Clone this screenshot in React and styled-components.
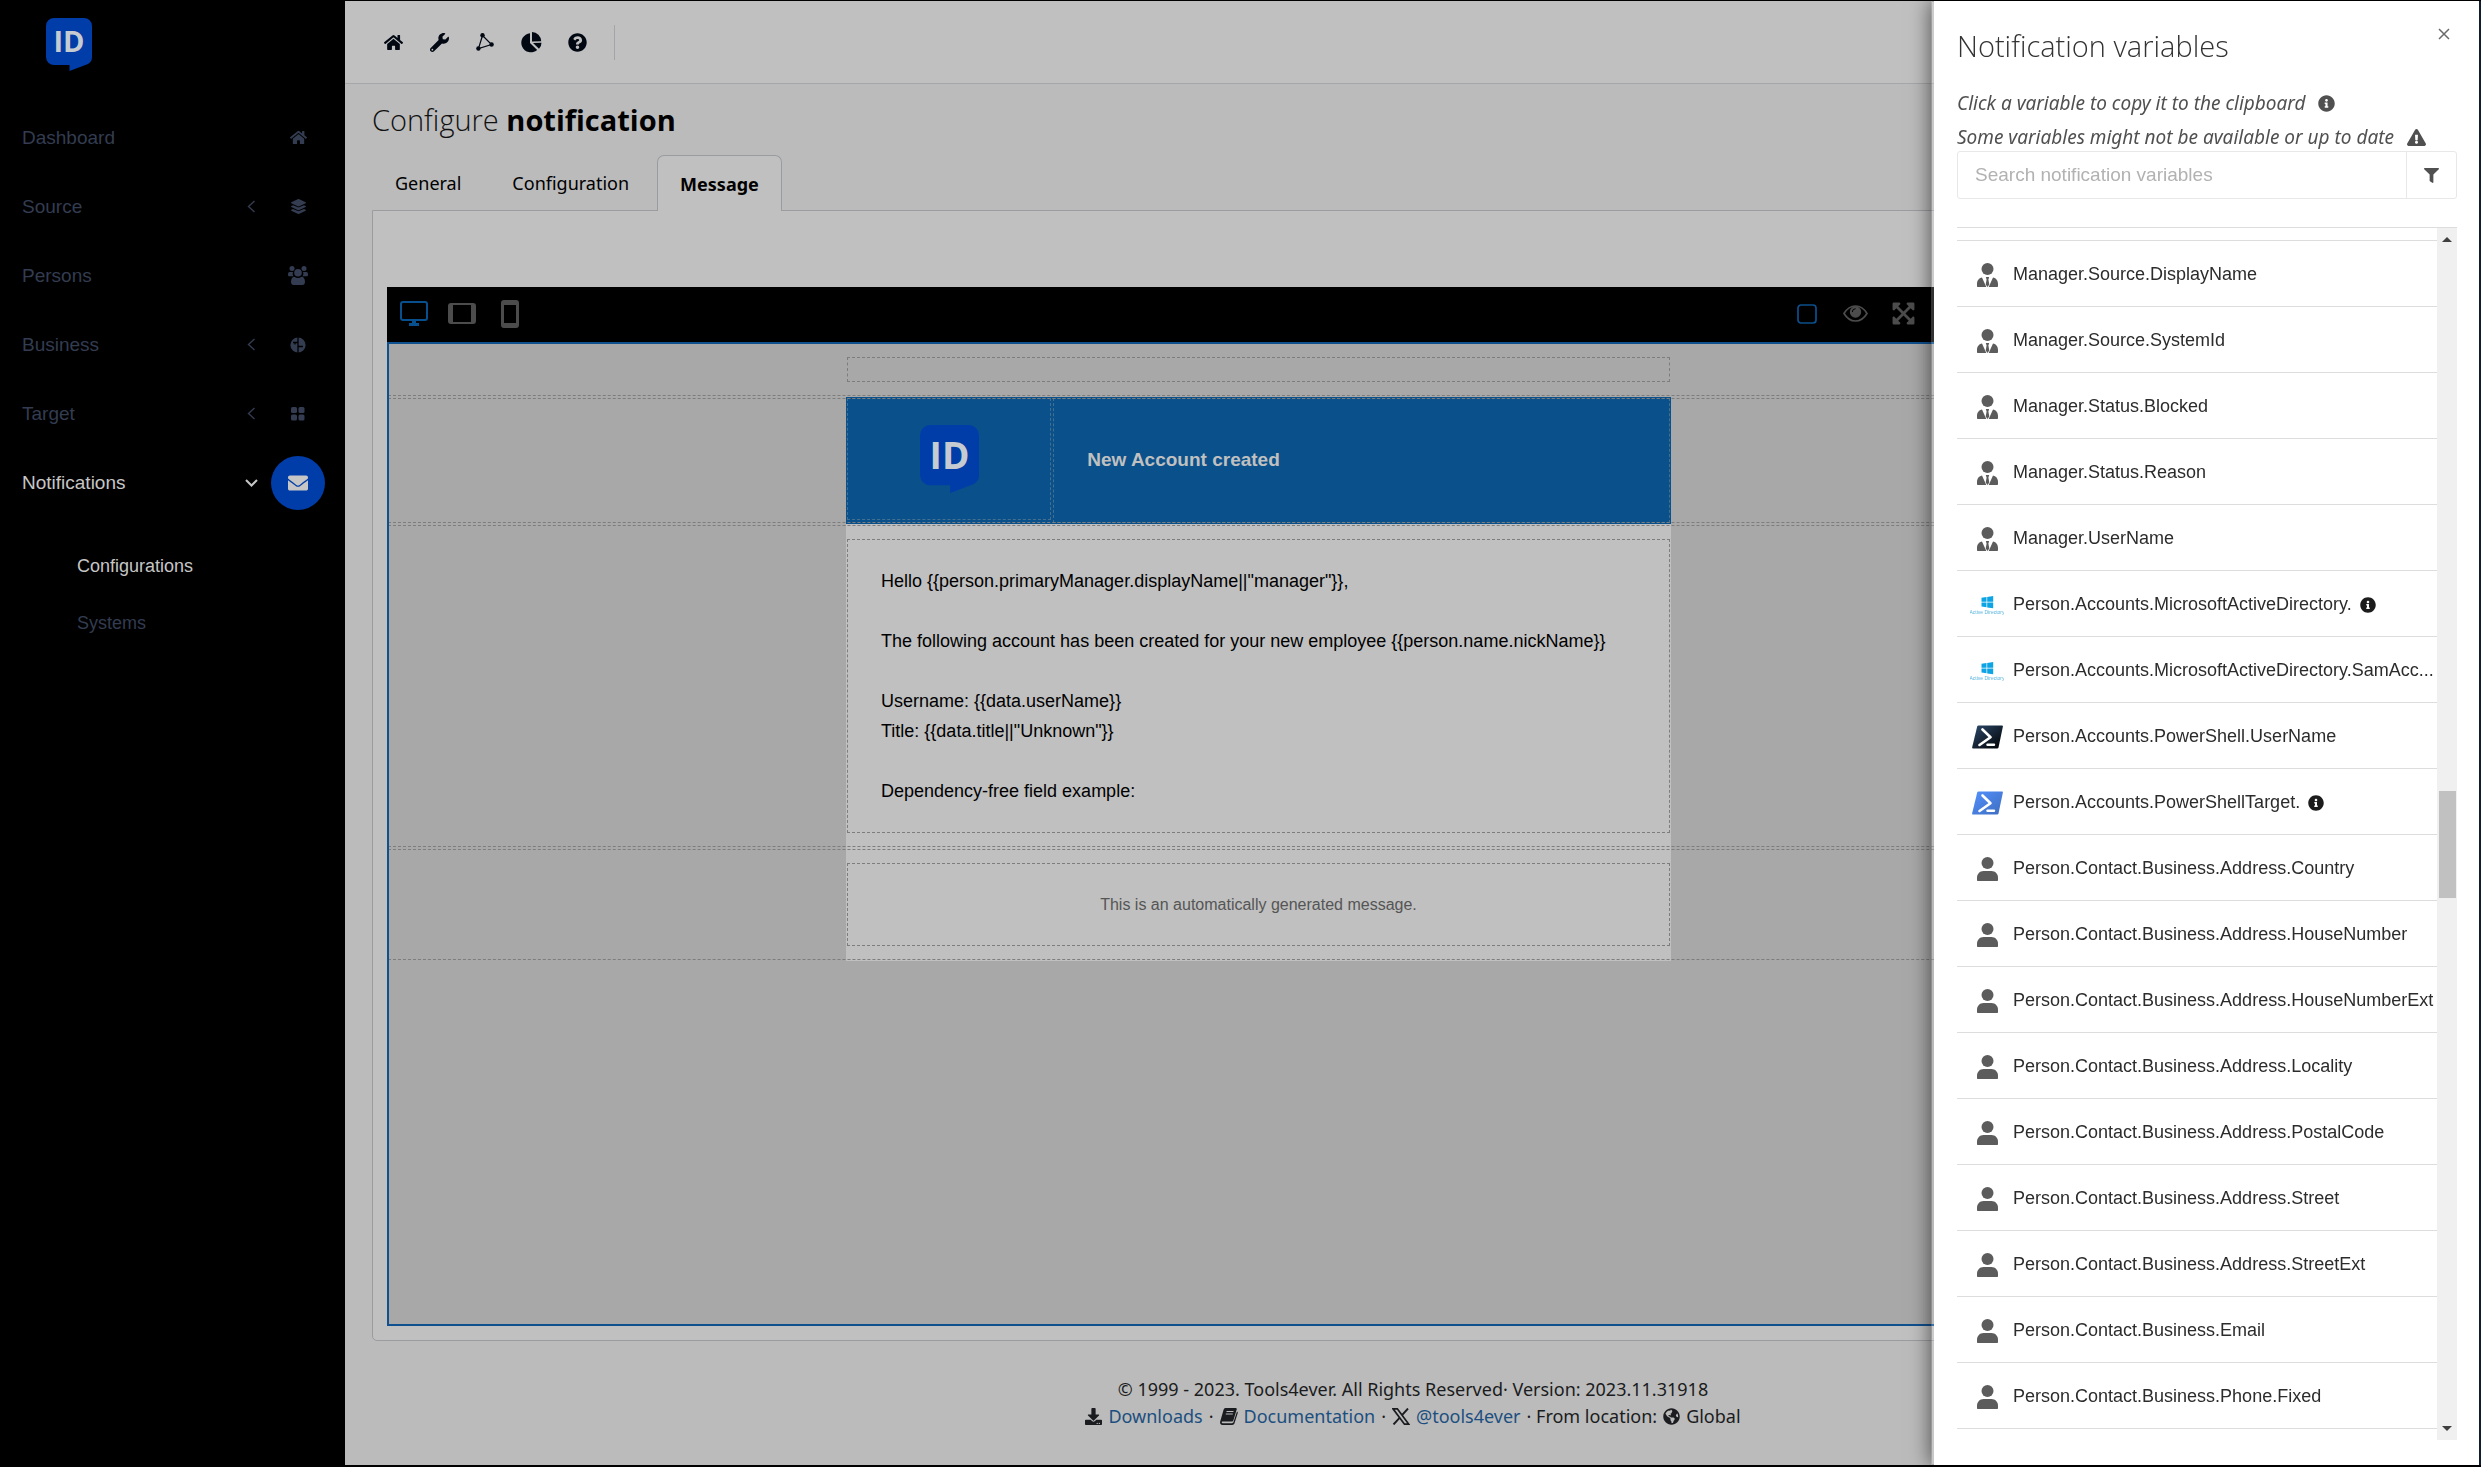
import React from "react";
import styled, { createGlobalStyle, css } from "styled-components";
import {
  FaHome,
  FaWrench,
  FaQuestionCircle,
  FaLayerGroup,
  FaEnvelope,
  FaDownload,
  FaGlobeAmericas,
  FaInfoCircle,
  FaExclamationTriangle,
  FaFilter,
  FaExpandArrowsAlt,
} from "react-icons/fa";

const variables = [
  { icon: "manager", name: "Manager.Source.DisplayName" },
  { icon: "manager", name: "Manager.Source.SystemId" },
  { icon: "manager", name: "Manager.Status.Blocked" },
  { icon: "manager", name: "Manager.Status.Reason" },
  { icon: "manager", name: "Manager.UserName" },
  { icon: "ad", name: "Person.Accounts.MicrosoftActiveDirectory.", info: true },
  { icon: "ad", name: "Person.Accounts.MicrosoftActiveDirectory.SamAcc..." },
  { icon: "psDark", name: "Person.Accounts.PowerShell.UserName" },
  { icon: "psBlue", name: "Person.Accounts.PowerShellTarget.", info: true },
  { icon: "person", name: "Person.Contact.Business.Address.Country" },
  { icon: "person", name: "Person.Contact.Business.Address.HouseNumber" },
  { icon: "person", name: "Person.Contact.Business.Address.HouseNumberExt" },
  { icon: "person", name: "Person.Contact.Business.Address.Locality" },
  { icon: "person", name: "Person.Contact.Business.Address.PostalCode" },
  { icon: "person", name: "Person.Contact.Business.Address.Street" },
  { icon: "person", name: "Person.Contact.Business.Address.StreetExt" },
  { icon: "person", name: "Person.Contact.Business.Email" },
  { icon: "person", name: "Person.Contact.Business.Phone.Fixed" },
];

const IdLogo = ({ width }) => (
  <svg width={width} viewBox="0 0 46 53" role="img" aria-label="ID">
    <path
      d="M8 0h30a8 8 0 0 1 8 8v31c0 3-1 5-4 7L23.500 53V47H8a8 8 0 0 1-8-8V8a8 8 0 0 1 8-8z"
      fill="#003da8"
    />
    <text
      x="23"
      y="34"
      textAnchor="middle"
      fontFamily="'Open Sans', sans-serif"
      fontWeight="700"
      fontSize="29"
      fill="#c6cbd2"
    >
      ID
    </text>
  </svg>
);

const PeopleIcon = () => (
  <svg width="20" height="19" viewBox="0 0 20 19" fill="currentColor">
    <circle cx="4" cy="2.600" r="2.500" />
    <circle cx="16" cy="2.600" r="2.500" />
    <path d="M1.500 6h3.500c-.7 1.800-.3 3.300.7 4.300H1.200C.3 10.300 0 9.500 0 8.500 0 7 .5 6 1.500 6zM18.500 6H15c.7 1.800.3 3.300-.7 4.300h4.500c.9 0 1.200-.8 1.200-1.800C20 7 19.500 6 18.500 6z" />
    <circle cx="10" cy="6.800" r="3.800" />
    <path d="M6.500 10.800c1 .8 2.200 1.200 3.500 1.200s2.500-.4 3.500-1.200c2.200 0 3.500 2 3.500 5 0 2-.8 3.200-2.500 3.200h-9C3.800 19 3 17.800 3 15.800c0-3 1.300-5 3.500-5z" />
  </svg>
);

const BusinessIcon = () => (
  <svg width="16" height="16" viewBox="0 0 16 16">
    <circle cx="8" cy="8" r="7.600" fill="currentColor" />
    <path
      d="M8 0v16M3 5.500h5M5 5.500v2M8 9.500h5"
      stroke="#000"
      strokeWidth="1.300"
      fill="none"
    />
  </svg>
);

const GridIcon = () => (
  <svg width="14" height="14" viewBox="0 0 14 14" fill="currentColor">
    <rect width="6" height="6" rx="1.500" />
    <rect x="7.500" width="6" height="6" rx="1.500" />
    <rect y="7.500" width="6" height="6" rx="1.500" />
    <rect x="7.500" y="7.500" width="6" height="6" rx="1.500" />
  </svg>
);

const NetworkIcon = () => (
  <svg width="18" height="18" viewBox="0 0 18 18">
    <path
      d="M6.500 2.500L15.500 11.500L2.500 15.500Z"
      fill="none"
      stroke="currentColor"
      strokeWidth="1.200"
    />
    <circle cx="6.500" cy="2.300" r="2.200" fill="currentColor" />
    <circle cx="15.600" cy="11.500" r="2.200" fill="currentColor" />
    <circle cx="2.400" cy="15.500" r="2.200" fill="currentColor" />
  </svg>
);

const PieIcon = () => (
  <svg width="22" height="21" viewBox="0 0 22 21" fill="currentColor">
    <path d="M10 1.200V11l7.200 7A9.600 9.600 0 1 1 10 1.200z" />
    <path d="M12 0a9.600 9.600 0 0 1 9.200 9.300L12 9.500z" />
    <path d="M13 11l8.500-.3a9 9 0 0 1-2.500 6.100z" />
  </svg>
);

const ChevronIcon = ({ open }) => (
  <svg
    width="13"
    height="13"
    viewBox="0 0 13 13"
    fill="none"
    stroke="currentColor"
    strokeWidth={open ? 2 : 1.4}
  >
    <path d={open ? "M1 4l5.500 5.500L12 4" : "M9.500 1L3.500 6.500L9.500 12"} />
  </svg>
);

const DesktopIcon = () => (
  <svg width="28" height="26" viewBox="0 0 28 26">
    <rect x="1" y="1" width="26" height="18" rx="2" fill="none" stroke="currentColor" strokeWidth="2" />
    <path d="M12 19h4v3h3v3H9v-3h3z" fill="currentColor" />
  </svg>
);

const TabletIcon = () => (
  <svg width="28" height="21" viewBox="0 0 28 21">
    <path
      fill="currentColor"
      fillRule="evenodd"
      d="M3 0h22a3 3 0 0 1 3 3v15a3 3 0 0 1-3 3H3a3 3 0 0 1-3-3V3a3 3 0 0 1 3-3zM5 2v17h18V2z"
    />
  </svg>
);

const MobileIcon = () => (
  <svg width="18" height="28" viewBox="0 0 18 28">
    <path
      fill="currentColor"
      fillRule="evenodd"
      d="M3 0h12a3 3 0 0 1 3 3v22a3 3 0 0 1-3 3H3a3 3 0 0 1-3-3V3a3 3 0 0 1 3-3zM3 5v18h12V5z"
    />
  </svg>
);

const SquareIcon = () => (
  <svg width="20" height="20" viewBox="0 0 20 20">
    <rect x="1" y="1" width="18" height="18" rx="3" fill="none" stroke="currentColor" strokeWidth="1.700" />
  </svg>
);

const EyeIcon = () => (
  <svg width="25" height="17" viewBox="0 0 25 17">
    <path
      d="M1 8.500C4 3.500 8 1 12.500 1S21 3.500 24 8.500C21 13.500 17 16 12.500 16S4 13.500 1 8.500z"
      fill="none"
      stroke="currentColor"
      strokeWidth="1.700"
    />
    <circle cx="12.500" cy="7" r="5.700" fill="currentColor" />
    <path d="M9.300 7a3.300 3.300 0 0 1 3.300-3.300" fill="none" stroke="#000" strokeWidth="1" />
  </svg>
);

const BookIcon = () => (
  <svg width="18" height="17" viewBox="0 0 18 17">
    <path
      d="M5.500 0h10c1 0 1.500.7 1.200 1.600L13.500 12c-.3 1-1 1.500-2 1.500H2.300c-.8 0-.8 1.700.3 1.700H12c.7 0 1.300-.4 1.500-1.100L17 3.500c.7.300 1 .9.700 1.700L14.500 15.200c-.3 1-1.200 1.700-2.300 1.700H2.500C.8 17-.4 15.200.2 13.500L3.500 2C3.800.8 4.500 0 5.500 0z"
      fill="currentColor"
    />
    <path d="M6.500 3.500h7M5.800 6h7" stroke="#bbb" strokeWidth="1" />
  </svg>
);

const XLogo = () => (
  <svg width="18" height="17" viewBox="0 0 18 17" fill="none" stroke="currentColor">
    <path d="M1 .8h4.300l11.500 15.400h-4.300z" strokeWidth="1.700" />
    <path d="M16 .5L10 7.200M7.800 9.600L1.500 16.500" strokeWidth="1.900" />
  </svg>
);

const PersonIcon = () => (
  <svg width="21" height="24" viewBox="0 0 21 24" fill="currentColor">
    <circle cx="10.500" cy="6" r="6" />
    <path d="M6.500 14h8c3.700 0 6.500 2.900 6.500 6.600V23c0 .6-.4 1-1 1H1c-.6 0-1-.4-1-1v-2.400C0 16.900 2.800 14 6.500 14z" />
  </svg>
);

const ManagerIcon = () => (
  <svg width="21" height="24" viewBox="0 0 21 24" fill="currentColor">
    <circle cx="10.500" cy="6" r="6" />
    <path d="M5 14.500l4.300 9.500H1c-.6 0-1-.4-1-1v-2.200c0-3.200 2-5.800 5-6.300zM16 14.500l-4.300 9.500H20c.6 0 1-.4 1-1v-2.200c0-3.200-2-5.800-5-6.300z" />
    <path d="M8.800 14h3.400l-.8 2.600.9 4.800-1.800 2.600-1.800-2.600.9-4.800z" />
  </svg>
);

const ActiveDirectoryIcon = () => (
  <svg width="34" height="20" viewBox="0 0 34 20">
    <path
      d="M11.500 2.700l5-.7v4.800h-5zM17.200 1.900l6-.9v5.800h-6zM11.500 7.500h5v4.800l-5-.7zM17.200 7.500h6v5.700l-6-.8z"
      fill="#0ca4e4"
    />
    <text
      x="17"
      y="19"
      textAnchor="middle"
      fontFamily="'Liberation Sans', sans-serif"
      fontSize="5"
      fill="#58b4dd"
    >
      Active Directory
    </text>
  </svg>
);

const PowerShellIcon = ({ from, to, id }) => (
  <svg width="31" height="24" viewBox="0 0 31 24">
    <defs>
      <linearGradient id={id} x1="0" y1="0" x2="1" y2="1">
        <stop offset="0" stopColor={from} />
        <stop offset="1" stopColor={to} />
      </linearGradient>
    </defs>
    <path
      d="M6.500 0.500h23.500c.7 0 1 .5.900 1.100L26.500 22.500c-.2.700-.7 1-1.300 1H1c-.7 0-1-.5-.9-1.100L5.200 1.500c.2-.6.6-1 1.300-1z"
      fill={`url(#${id})`}
    />
    <path
      d="M10.500 4.500l8 7.700L7.500 20"
      fill="none"
      stroke="#fff"
      strokeWidth="2.600"
      strokeLinecap="round"
      strokeLinejoin="round"
    />
    <path d="M15.500 19.800h6.500" stroke="#fff" strokeWidth="2.400" strokeLinecap="round" />
  </svg>
);

const icons = {
  manager: <ManagerIcon />,
  person: <PersonIcon />,
  ad: <ActiveDirectoryIcon />,
  psDark: <PowerShellIcon id="ps-dark" from="#2c4a6c" to="#000000" />,
  psBlue: <PowerShellIcon id="ps-blue" from="#5391fe" to="#3e6dbf" />,
};

const App = () => {
  return (
    <>
      <GlobalStyle />
      <Page>
        <Sidebar>
          <Brand href="#">
            <IdLogo width={46} />
          </Brand>
          <Nav>
            <NavItem href="#">
              Dashboard
              <NavIcon>
                <FaHome />
              </NavIcon>
            </NavItem>
            <NavItem href="#">
              Source
              <Chevron>
                <ChevronIcon />
              </Chevron>
              <NavIcon>
                <FaLayerGroup size={15} />
              </NavIcon>
            </NavItem>
            <NavItem href="#">
              Persons
              <NavIcon>
                <PeopleIcon />
              </NavIcon>
            </NavItem>
            <NavItem href="#">
              Business
              <Chevron>
                <ChevronIcon />
              </Chevron>
              <NavIcon>
                <BusinessIcon />
              </NavIcon>
            </NavItem>
            <NavItem href="#">
              Target
              <Chevron>
                <ChevronIcon />
              </Chevron>
              <NavIcon>
                <GridIcon />
              </NavIcon>
            </NavItem>
            <NavItem href="#" $active>
              Notifications
              <Chevron>
                <ChevronIcon open />
              </Chevron>
              <NavIcon $active>
                <FaEnvelope size={20} />
              </NavIcon>
            </NavItem>
          </Nav>
          <SubNav>
            <SubItem href="#" $active>
              Configurations
            </SubItem>
            <SubItem href="#">Systems</SubItem>
          </SubNav>
        </Sidebar>

        <Main>
          <TopBar>
            <TopButton aria-label="Home">
              <FaHome />
            </TopButton>
            <TopButton aria-label="Tools">
              <FaWrench />
            </TopButton>
            <TopButton aria-label="Network">
              <NetworkIcon />
            </TopButton>
            <TopButton aria-label="Reports">
              <PieIcon />
            </TopButton>
            <TopButton aria-label="Help">
              <FaQuestionCircle />
            </TopButton>
            <TopDivider />
          </TopBar>

          <Content>
            <PageTitle>
              Configure <strong>notification</strong>
            </PageTitle>
            <Tabs role="tablist">
              <Tab role="tab">General</Tab>
              <Tab role="tab">Configuration</Tab>
              <Tab role="tab" $active>
                Message
              </Tab>
            </Tabs>
            <Card>
              <Editor>
                <EditorMain>
                  <EditorBar>
                    <BarButton aria-label="Desktop" $color="#07508d">
                      <DesktopIcon />
                    </BarButton>
                    <BarButton aria-label="Tablet">
                      <TabletIcon />
                    </BarButton>
                    <BarButton aria-label="Mobile">
                      <MobileIcon />
                    </BarButton>
                    <Spacer />
                    <BarButton aria-label="Outlines" $color="#0c4f8c">
                      <SquareIcon />
                    </BarButton>
                    <BarButton aria-label="Preview">
                      <EyeIcon />
                    </BarButton>
                    <BarButton aria-label="Fullscreen">
                      <FaExpandArrowsAlt size={25} />
                    </BarButton>
                  </EditorBar>
                  <Canvas>
                    <MailRow>
                      <MailBody>
                        <SpacerCell />
                      </MailBody>
                    </MailRow>
                    <MailRow>
                      <MailHeader>
                        <LogoCell>
                          <IdLogo width={59} />
                        </LogoCell>
                        <TitleCell>New Account created</TitleCell>
                      </MailHeader>
                    </MailRow>
                    <MailRow>
                      <MailBody $filled>
                        <TextCell>
                          {'Hello {{person.primaryManager.displayName||"manager"}},'}
                          <br />
                          <br />
                          {"The following account has been created for your new employee {{person.name.nickName}}"}
                          <br />
                          <br />
                          {"Username: {{data.userName}}"}
                          <br />
                          {'Title: {{data.title||"Unknown"}}'}
                          <br />
                          <br />
                          Dependency-free field example:
                        </TextCell>
                      </MailBody>
                    </MailRow>
                    <MailRow>
                      <MailBody $filled>
                        <FooterCell>This is an automatically generated message.</FooterCell>
                      </MailBody>
                    </MailRow>
                  </Canvas>
                </EditorMain>
                <EditorSide />
              </Editor>
            </Card>
          </Content>

          <Footer>
            <div>© 1999 - 2023. Tools4ever. All Rights Reserved· Version: 2023.11.31918</div>
            <FooterLine>
              <FaDownload size={17} />
              <a href="#">Downloads</a>·
              <BookIcon />
              <a href="#">Documentation</a>·
              <XLogo />
              <a href="#">@tools4ever</a>· From location:
              <FaGlobeAmericas size={17} />
              Global
            </FooterLine>
          </Footer>
        </Main>

        <Drawer>
          <DrawerHead>
            <h2>Notification variables</h2>
            <Close aria-label="Close">
              <svg width="12" height="12" viewBox="0 0 12 12" stroke="currentColor" strokeWidth="1.500">
                <path d="M1 1l10 10M11 1L1 11" />
              </svg>
            </Close>
          </DrawerHead>
          <Hints>
            <Hint>
              Click a variable to copy it to the clipboard
              <FaInfoCircle size={17} />
            </Hint>
            <Hint>
              Some variables might not be available or up to date
              <FaExclamationTriangle size={19} />
            </Hint>
          </Hints>
          <Search>
            <input
              type="text"
              aria-label="Search notification variables"
              placeholder="Search notification variables"
            />
            <button aria-label="Filter">
              <FaFilter size={15} />
            </button>
          </Search>
          <ListWrap>
            <List>
              <ListStub />
              {variables.map((item) => (
                <li key={item.name}>
                  <Variable>
                    <VariableIcon>{icons[item.icon]}</VariableIcon>
                    {item.name}
                    {item.info && <FaInfoCircle size={16} />}
                  </Variable>
                </li>
              ))}
            </List>
            <Scrollbar>
              <Arrow $up />
              <Track>
                <Thumb />
              </Track>
              <Arrow />
            </Scrollbar>
          </ListWrap>
        </Drawer>
      </Page>
    </>
  );
};

export default App;

const sans = css`
  font-family: "Liberation Sans", Arial, sans-serif;
`;

const humanist = css`
  font-family: "Segoe UI", "Noto Sans", "Open Sans", sans-serif;
`;

const light = css`
  font-family: "Segoe UI", "Open Sans", sans-serif;
  font-weight: 300;
`;

const outlined = css`
  outline: 1px dashed #7d7d7d;
  outline-offset: -2px;
`;

const GlobalStyle = createGlobalStyle`
  * {
    box-sizing: border-box;
  }

  body {
    margin: 0;
    background: #000;
    font-family: "Liberation Sans", Arial, sans-serif;
    overflow: hidden;
  }

  button {
    font: inherit;
    color: inherit;
    background: none;
    border: none;
    padding: 0;
    cursor: pointer;
  }

  a {
    text-decoration: none;
  }

  svg {
    flex: none;
  }
`;

const Page = styled.div`
  display: flex;
  min-height: 100vh;
  padding: 1px 0 2px;
  background: #000;
`;

const Sidebar = styled.aside`
  flex: none;
  width: 345px;
  padding: 17px 20px 0 22px;
  ${sans}
`;

const Brand = styled.a`
  display: flex;
  margin: 0 0 32px 24px;
`;

const Nav = styled.nav`
  display: flex;
  flex-direction: column;
`;

const NavItem = styled.a`
  display: flex;
  align-items: center;
  justify-content: space-between;
  height: 69px;
  font-size: 19px;
  color: ${(props) => (props.$active ? "#c6c6c6" : "#333c50")};
`;

const Chevron = styled.span`
  display: flex;
  margin-left: auto;
  margin-right: 13px;
`;

const NavIcon = styled.span`
  display: flex;
  align-items: center;
  justify-content: center;
  width: 54px;
  height: 54px;
  border-radius: 50%;
  font-size: 17px;
  background: ${(props) => (props.$active ? "#003da8" : "transparent")};
`;

const SubNav = styled.nav`
  display: flex;
  flex-direction: column;
  padding: 21px 0 0 55px;
`;

const SubItem = styled.a`
  line-height: 57px;
  font-size: 18px;
  color: ${(props) => (props.$active ? "#c6c6c6" : "#333c50")};
`;

const Main = styled.main`
  flex: 1;
  min-width: 0;
  display: flex;
  flex-direction: column;
  background: #bbb;
  ${humanist}
`;

const TopBar = styled.header`
  display: flex;
  align-items: center;
  height: 83px;
  padding-left: 25px;
  background: #c0c0c0;
  border-bottom: 1px solid #a5a7a9;
`;

const TopButton = styled.button`
  display: flex;
  align-items: center;
  justify-content: center;
  width: 46px;
  height: 46px;
  font-size: 19px;
  color: #010812;
`;

const TopDivider = styled.span`
  width: 1px;
  height: 35px;
  margin-left: 14px;
  background: #a2a4a6;
`;

const Content = styled.section`
  flex: 1;
  display: flex;
  flex-direction: column;
  padding: 16px 28px 0 27px;
`;

const PageTitle = styled.h1`
  margin: 0 0 15px;
  font-size: 29px;
  line-height: 40px;
  color: #111;
  ${light}

  strong {
    font-weight: 700;
    color: #000;
  }
`;

const Tabs = styled.div`
  display: flex;
  gap: 5px;
`;

const Tab = styled.button`
  height: 56px;
  padding: 0 22px;
  margin-bottom: -1px;
  font-size: 18px;
  color: #000;
  border: 1px solid transparent;

  ${(props) =>
    props.$active &&
    css`
      position: relative;
      font-weight: 700;
      background: #c0c0c0;
      border-color: #9a9ca0;
      border-bottom: none;
      border-radius: 7px 7px 0 0;
    `}
`;

const Card = styled.div`
  flex: 1;
  display: flex;
  padding: 76px 14px 14px;
  background: #c0c0c0;
  border: 1px solid #9a9ca0;
  border-radius: 0 0 5px 5px;
`;

const Editor = styled.div`
  flex: 1;
  display: flex;
`;

const EditorMain = styled.div`
  flex: 1;
  display: flex;
  flex-direction: column;
`;

const EditorSide = styled.div`
  width: 308px;
  background: #000;
`;

const EditorBar = styled.div`
  display: flex;
  align-items: center;
  height: 55px;
  padding: 0 203px 2px 3px;
  background: #000;
`;

const BarButton = styled.button`
  display: flex;
  align-items: center;
  justify-content: center;
  width: 48px;
  height: 48px;
  color: ${(props) => props.$color || "#4c4c4c"};
`;

const Spacer = styled.span`
  flex: 1;
`;

/* the selection frame is painted above the rows */
const Canvas = styled.div`
  flex: 1;
  position: relative;
  background: #a8a8a8;
  ${sans}

  &::after {
    content: "";
    position: absolute;
    inset: 0;
    border: 2px solid #0f508f;
    pointer-events: none;
  }
`;

const MailRow = styled.div`
  display: flex;
  justify-content: center;
  position: relative;

  &::after {
    content: "";
    position: absolute;
    inset: 0;
    ${outlined}
  }
`;

const MailBody = styled.div`
  width: 825px;
  padding: 14px 0;
  background: ${(props) => (props.$filled ? "#c0c0c0" : "transparent")};
`;

const SpacerCell = styled.div`
  height: 27px;
  ${outlined}
`;

const MailHeader = styled.div`
  display: flex;
  align-items: flex-start;
  width: 825px;
  height: 127px;
  background: #0a508b;
`;

const LogoCell = styled.div`
  display: flex;
  align-items: center;
  justify-content: center;
  width: 25%;
  height: 124px;
  ${outlined}
  outline-color: #44708f;
`;

const TitleCell = styled.div`
  display: flex;
  align-items: center;
  width: 75%;
  height: 127px;
  padding: 0 0 2px 35px;
  font-size: 19px;
  font-weight: 700;
  color: #c0c0c0;
  ${outlined}
  outline-color: #44708f;
`;

const TextCell = styled.div`
  padding: 28px 35px;
  font-size: 18px;
  line-height: 30px;
  color: #000;
  ${outlined}
`;

const FooterCell = styled.div`
  padding: 28px 35px;
  font-size: 16px;
  line-height: 29px;
  text-align: center;
  color: #555;
  ${outlined}
`;

const Footer = styled.footer`
  padding: 35px 0;
  font-size: 18px;
  line-height: 27px;
  text-align: center;
  color: #1a1c20;

  a {
    color: #1b4f80;
  }
`;

const FooterLine = styled.div`
  display: flex;
  align-items: center;
  justify-content: center;
  gap: 6px;
`;

const Drawer = styled.aside`
  position: fixed;
  top: 1px;
  right: 0;
  bottom: 2px;
  width: 550px;
  display: flex;
  flex-direction: column;
  padding: 22px 22px 25px 23px;
  background: #fff;
  background-clip: padding-box;
  border-left: 3px solid rgba(255, 255, 255, 0.2);
  border-right: 2px solid #101c30;
  box-shadow: 0 0 20px rgba(0, 0, 0, 0.6);
  ${humanist}
`;

const DrawerHead = styled.div`
  display: flex;
  align-items: flex-start;
  justify-content: space-between;

  h2 {
    margin: 0;
    font-size: 29px;
    line-height: 46px;
    color: #333;
    ${light}
  }
`;

const Close = styled.button`
  display: flex;
  padding: 5px 7px;
  color: #6a6a6a;
`;

const Hints = styled.div`
  display: flex;
  flex-direction: column;
  gap: 6px;
  margin-top: 20px;
`;

const Hint = styled.div`
  display: flex;
  align-items: center;
  gap: 13px;
  font-size: 19px;
  line-height: 28px;
  font-style: italic;
  white-space: nowrap;
  color: #505050;
`;

const Search = styled.div`
  display: flex;
  height: 48px;
  border: 1px solid #e8e8e8;
  border-radius: 3px;

  input {
    flex: 1;
    min-width: 0;
    padding: 0 17px;
    border: none;
    outline: none;
    background: none;
    color: #333;
    font-size: 19px;
    ${sans}
  }

  input::placeholder {
    color: #b2b2b2;
    opacity: 1;
  }

  button {
    display: flex;
    align-items: center;
    justify-content: center;
    width: 50px;
    border-left: 1px solid #e8e8e8;
    color: #505050;
  }
`;

const ListWrap = styled.div`
  flex: 1;
  min-height: 0;
  display: flex;
  margin-top: 28px;
  border-top: 1px solid #ddd;
`;

const List = styled.ul`
  flex: 1;
  min-width: 0;
  margin: 0;
  padding: 0;
  list-style: none;
  overflow: hidden;
  ${sans}
`;

/* tail of the row that is scrolled out of view */
const ListStub = styled.li`
  height: 13px;
  border-bottom: 1px solid #ddd;
`;

const Variable = styled.button`
  display: flex;
  align-items: center;
  width: 100%;
  height: 66px;
  padding-top: 2px;
  border-bottom: 1px solid #ddd;
  font-size: 18px;
  text-align: left;
  white-space: nowrap;
  color: #2c2c2c;

  > svg {
    margin-left: 8px;
    color: #1c1c1c;
  }
`;

const VariableIcon = styled.span`
  flex: none;
  display: flex;
  align-items: center;
  justify-content: center;
  width: 34px;
  margin: 0 9px 0 13px;
  color: #5c5c5c;
`;

const Scrollbar = styled.div`
  flex: none;
  display: flex;
  flex-direction: column;
  align-items: center;
  width: 20px;
  padding: 9px 0;
  background: #f0f0f0;
`;

const Arrow = styled.span`
  border: 5px solid transparent;
  border-top-width: ${(props) => (props.$up ? "0" : "5px")};
  border-bottom-width: ${(props) => (props.$up ? "5px" : "0")};
  border-top-color: ${(props) => (props.$up ? "transparent" : "#404040")};
  border-bottom-color: ${(props) => (props.$up ? "#404040" : "transparent")};
`;

const Track = styled.div`
  flex: 1;
  padding-top: 549px;
`;

const Thumb = styled.div`
  width: 17px;
  height: 107px;
  background: #c1c1c1;
`;
